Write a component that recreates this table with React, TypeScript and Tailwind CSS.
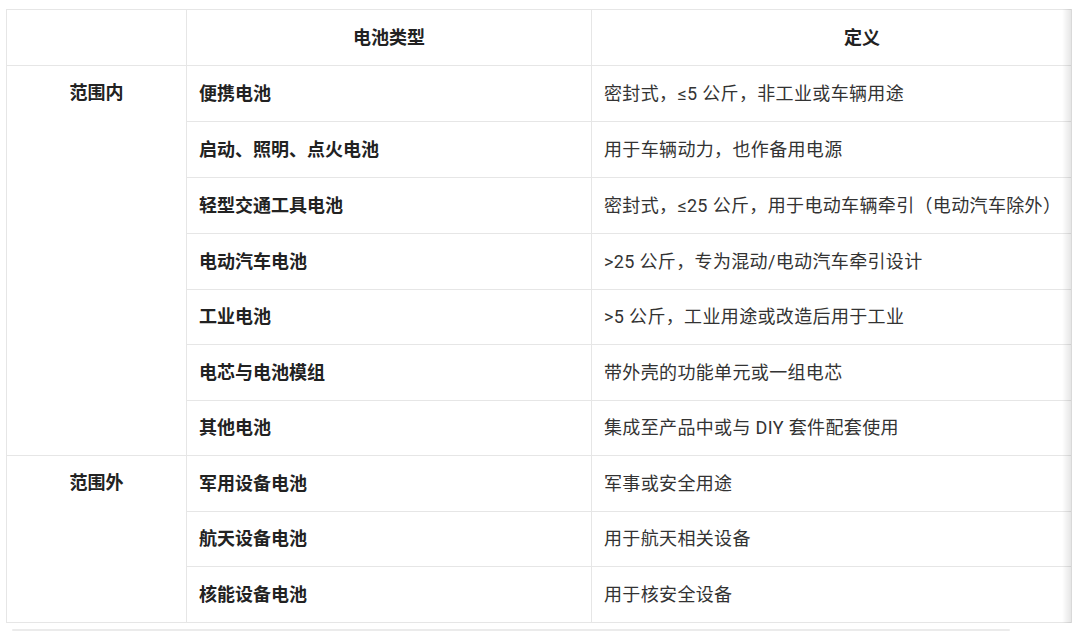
const rows = [
  { name: "便携电池", desc: "密封式，≤5 公斤，非工业或车辆用途", h: "h-[56px]" },
  { name: "启动、照明、点火电池", desc: "用于车辆动力，也作备用电源", h: "h-[56px]" },
  { name: "轻型交通工具电池", desc: "密封式，≤25 公斤，用于电动车辆牵引（电动汽车除外）", h: "h-[56px]" },
  { name: "电动汽车电池", desc: ">25 公斤，专为混动/电动汽车牵引设计", h: "h-[56px]" },
  { name: "工业电池", desc: ">5 公斤，工业用途或改造后用于工业", h: "h-[55px]" },
  { name: "电芯与电池模组", desc: "带外壳的功能单元或一组电芯", h: "h-[56px]" },
  { name: "其他电池", desc: "集成至产品中或与 DIY 套件配套使用", h: "h-[55px]" },
  { name: "军用设备电池", desc: "军事或安全用途", h: "h-[56px]" },
  { name: "航天设备电池", desc: "用于航天相关设备", h: "h-[55px]" },
  { name: "核能设备电池", desc: "用于核安全设备", h: "h-[56px]" },
];

const cell = "border border-[#e6e6e6] px-3 align-middle";

export default function App() {
  return (
    <div className="min-h-[631px] w-[1080px] bg-white pl-[6px] pt-[9px] font-['Roboto','Noto_Sans_CJK_SC',sans-serif] text-[18px] leading-[26px] text-[#333]">
      <div className="relative w-[1066px] overflow-hidden pb-[9px]">
        <table className="w-[1126px] table-fixed">
          <colgroup>
            <col className="w-[180px]" />
            <col className="w-[405px]" />
            <col className="w-[541px]" />
          </colgroup>
          <thead>
            <tr className="h-[56px]">
              <th className={cell}></th>
              <th className={`${cell} text-center font-bold text-[#222]`}>电池类型</th>
              <th className={`${cell} text-center font-bold text-[#222]`}>定义</th>
            </tr>
          </thead>
          <tbody>
            {rows.map((r, i) => (
              <tr key={r.name} className={r.h}>
                {i === 0 && (
                  <td rowSpan={7} className={`${cell} !align-top pt-[14px] text-center font-bold text-[#222]`}>
                    范围内
                  </td>
                )}
                {i === 7 && (
                  <td rowSpan={3} className={`${cell} !align-top pt-[14px] text-center font-bold text-[#222]`}>
                    范围外
                  </td>
                )}
                <td className={`${cell} font-bold text-[#222]`}>{r.name}</td>
                <td className={`${cell} tracking-[0.35px] text-[#333]`}>{r.desc}</td>
              </tr>
            ))}
          </tbody>
        </table>
        <div className="pointer-events-none absolute right-0 top-0 bottom-[9px] w-[10px] border-r border-[#d9d9d9] bg-gradient-to-l from-black/10 to-transparent" />
        <div className="absolute bottom-[1px] left-[6px] h-[2px] w-[998px] rounded-full bg-[#ebebeb]" />
      </div>
    </div>
  );
}
